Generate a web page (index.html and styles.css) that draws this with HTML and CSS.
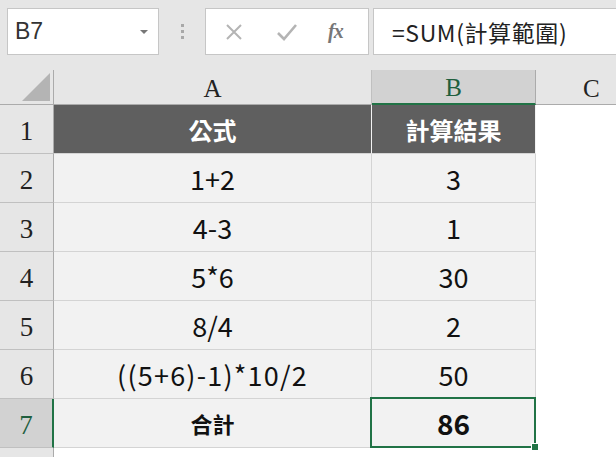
FILE: index.html
```html
<!DOCTYPE html>
<html>
<head>
<meta charset="utf-8">
<link rel="stylesheet" href="styles.css">
</head>
<body>
<div class="app">
  <div class="toolbar">
    <div class="namebox">
      <span class="name">B7</span>
      <span class="caret"></span>
    </div>
    <div class="grip"><i></i><i></i><i></i></div>
    <div class="buttons">
      <svg class="ico" width="20" height="20" viewBox="0 0 20 20"><path d="M3 3 L17 17 M17 3 L3 17" stroke="#b4b4b4" stroke-width="2" fill="none"/></svg>
      <svg class="ico" width="22" height="20" viewBox="0 0 22 20"><path d="M2 11 L8 17 L20 3" stroke="#b4b4b4" stroke-width="2.6" fill="none"/></svg>
      <span class="fx">fx</span>
    </div>
    <div class="formula">=SUM(計算範圍)</div>
  </div>
  <div class="sheet">
    <div class="corner"><span class="tri"></span></div>
    <div class="colh">A</div>
    <div class="colh sel">B</div>
    <div class="colh last">C</div>

    <div class="rowh">1</div>
    <div class="cell head">公式</div>
    <div class="cell head">計算結果</div>
    <div class="blank"></div>

    <div class="rowh">2</div>
    <div class="cell">1+2</div>
    <div class="cell">3</div>
    <div class="blank"></div>

    <div class="rowh">3</div>
    <div class="cell">4-3</div>
    <div class="cell">1</div>
    <div class="blank"></div>

    <div class="rowh">4</div>
    <div class="cell">5*6</div>
    <div class="cell">30</div>
    <div class="blank"></div>

    <div class="rowh">5</div>
    <div class="cell">8/4</div>
    <div class="cell">2</div>
    <div class="blank"></div>

    <div class="rowh">6</div>
    <div class="cell wide">((5+6)-1)*10/2</div>
    <div class="cell">50</div>
    <div class="blank"></div>

    <div class="rowh sel">7</div>
    <div class="cell total">合計</div>
    <div class="cell total big active">86<span class="selbox"></span><span class="handle"></span></div>
    <div class="blank"></div>

    <div class="rowh empty"></div>
    <div class="blank"></div>
    <div class="blank"></div>
    <div class="blank"></div>
  </div>
</div>
</body>
</html>
```
FILE: styles.css
```css
html, body {
  margin: 0;
  padding: 0;
  background: #ffffff;
}
.app {
  width: 616px;
  height: 457px;
  overflow: hidden;
  font-family: "Noto Sans CJK TC", "Noto Sans", sans-serif;
}
.toolbar {
  height: 70px;
  background: #e6e6e6;
  display: flex;
  align-items: flex-start;
  padding-top: 8px;
  box-sizing: border-box;
}
.namebox {
  margin-left: 7px;
  width: 152px;
  height: 47px;
  box-sizing: border-box;
  background: #fff;
  border: 1px solid #c6c6c6;
  display: flex;
  align-items: center;
  justify-content: space-between;
  padding: 0 10px 0 7px;
}
.name {
  font-family: "Liberation Sans", Arial, sans-serif;
  font-size: 23px;
  color: #333;
}
.caret {
  width: 0;
  height: 0;
  border-left: 4px solid transparent;
  border-right: 4px solid transparent;
  border-top: 4px solid #777;
}
.grip {
  width: 46px;
  height: 47px;
  display: flex;
  flex-direction: column;
  align-items: center;
  justify-content: center;
  gap: 3px;
}
.grip i {
  display: block;
  width: 3px;
  height: 3px;
  background: #a8a8a8;
}
.buttons {
  width: 164px;
  height: 47px;
  box-sizing: border-box;
  background: #fff;
  border: 1px solid #c6c6c6;
  display: flex;
  align-items: center;
  padding-left: 18px;
}
.buttons .ico {
  margin-right: 32px;
}
.buttons .ico + .ico {
  margin-right: 30px;
}
.fx {
  font-family: "Liberation Serif", "Times New Roman", serif;
  font-style: italic;
  font-weight: bold;
  font-size: 20px;
  color: #777;
  letter-spacing: -1px;
}
.formula {
  margin-left: 4px;
  flex: 1;
  height: 47px;
  box-sizing: border-box;
  background: #fff;
  border: 1px solid #c6c6c6;
  border-right: none;
  display: flex;
  align-items: center;
  padding-left: 18px;
  font-size: 23px;
  letter-spacing: 0.6px;
  color: #222;
}
.sheet {
  display: grid;
  grid-template-columns: 54px 318px 164px 1fr;
  grid-template-rows: 35px repeat(7, 49px) 1fr;
  height: 387px;
}
.corner {
  background: #e6e6e6;
  border-right: 1px solid #ababab;
  border-bottom: 1px solid #ababab;
  position: relative;
}
.tri {
  position: absolute;
  right: 3px;
  bottom: 3px;
  width: 0;
  height: 0;
  border-left: 28px solid transparent;
  border-bottom: 28px solid #b4b4b4;
}
.colh {
  background: #e6e6e6;
  border-right: 1px solid #c0c0c0;
  border-bottom: 1px solid #ababab;
  display: flex;
  align-items: center;
  justify-content: center;
  font-family: "Liberation Serif", "Times New Roman", serif;
  font-size: 25px;
  color: #222;
  padding-top: 3px;
  box-sizing: border-box;
}
.colh.sel {
  background: #d2d2d2;
  border-bottom: 2px solid #217346;
  color: #1f5f3e;
  border-right: 1px solid #ababab;
}
.colh.last {
  border-right: none;
  justify-content: flex-start;
  padding-left: 47px;
}
.rowh {
  background: #e6e6e6;
  border-right: 1px solid #ababab;
  border-bottom: 1px solid #c0c0c0;
  display: flex;
  align-items: center;
  justify-content: center;
  font-family: "Liberation Serif", "Times New Roman", serif;
  font-size: 27px;
  color: #222;
  padding-top: 4px;
  box-sizing: border-box;
}
.rowh.sel {
  background: #d2d2d2;
  border-right: 2px solid #217346;
  color: #1f5f3e;
}
.rowh.empty {
  border-bottom: none;
}
.cell {
  background: #f2f2f2;
  border-right: 1px solid #d4d4d4;
  border-bottom: 1px solid #d4d4d4;
  display: flex;
  align-items: center;
  justify-content: center;
  font-size: 27px;
  color: #111;
  box-sizing: border-box;
  position: relative;
}
.cell.wide {
  letter-spacing: 1.2px;
}
.cell.head {
  background: #5f5f5f;
  color: #fff;
  font-weight: bold;
  font-size: 24px;
  border-right: 1px solid #f2f2f2;
  border-bottom: 1px solid #d4d4d4;
}
.cell.total {
  font-weight: bold;
  font-size: 22px;
}
.cell.big {
  font-size: 28px;
}
.blank {
  background: #fff;
}
.selbox {
  position: absolute;
  left: -2px;
  top: -2px;
  right: -1px;
  bottom: -1px;
  border: 2px solid #217346;
  pointer-events: none;
}
.handle {
  position: absolute;
  right: -4px;
  bottom: -4px;
  width: 6px;
  height: 6px;
  background: #217346;
  border: 1px solid #fff;
}
```
